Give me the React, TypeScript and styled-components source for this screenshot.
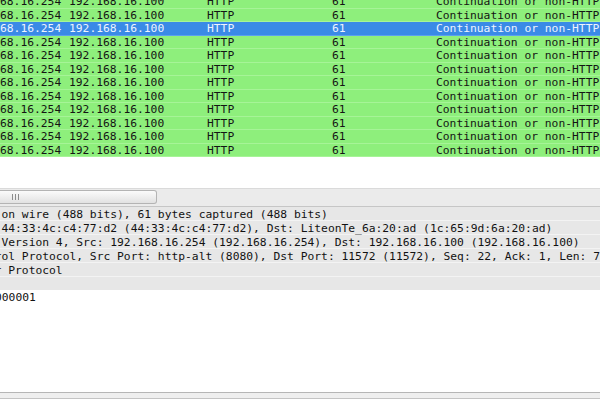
import styled, { createGlobalStyle } from "styled-components";

const GlobalStyle = createGlobalStyle`
    html, body {
        margin: 0;
        padding: 0;
        background: #ffffff;
        overflow: hidden;
    }
`

const mono = `"DejaVu Sans Mono", "Liberation Mono", monospace`;

const Window = styled.div`
    width: 600px;
    height: 400px;
    display: flex;
    flex-direction: column;
    overflow: hidden;
    font: 11.3px/1 ${mono};
    color: #121212;
`

const PacketPane = styled.div`
    height: 188px;
    overflow: hidden;
    background: #ffffff;
`

const PacketList = styled.div`
    margin-top: -5px;
    margin-left: -34px;
    width: 700px;
`

const PacketRow = styled.div<{ $selected?: boolean }>`
    display: grid;
    grid-template-columns: 103px 138px 125px 104px 1fr;
    align-items: center;
    height: 13.5px;
    box-sizing: border-box;
    padding-top: 1px;
    white-space: nowrap;
    background: ${(p) => (p.$selected ? "#3a8ae6" : "#8eef7c")};
    color: ${(p) => (p.$selected ? "#eef4ff" : "#141414")};
    border-bottom: 1px solid ${(p) => (p.$selected ? "#5c9ff0" : "#a6f497")};
`

const Cell = styled.span`
    overflow: visible;
`

const HScroll = styled.div`
    height: 19px;
    box-sizing: border-box;
    background: #ebebeb;
    border-top: 1px solid #dadada;
    border-bottom: 1px solid #c6c6c6;
    display: flex;
    align-items: flex-start;
`

const Thumb = styled.div`
    width: 157px;
    height: 14px;
    box-sizing: border-box;
    margin-top: 1px;
    background: linear-gradient(#fbfbfb, #e2e2e2);
    border: 1px solid #b4b4b4;
    border-left: none;
    border-radius: 0 3px 3px 0;
    display: flex;
    align-items: center;
    padding-left: 12px;
    gap: 2px;
`

const Grip = styled.i`
    width: 1px;
    height: 6px;
    background: #8c8c8c;
`

const DetailPane = styled.div`
    height: 83px;
    overflow: hidden;
    background: #e7e7e7;
`

const DetailRow = styled.div`
    height: 14px;
    box-sizing: border-box;
    padding-top: 3px;
    display: flex;
    align-items: center;
    white-space: nowrap;
    margin-left: -121px;
    border-bottom: 1px solid #f3f3f3;
`

const HexPane = styled.div`
    height: 102px;
    background: #ffffff;
    padding-top: 2px;
    box-sizing: border-box;
    margin-left: -5px;
    white-space: nowrap;
`

const StatusEdge = styled.div`
    height: 7px;
    box-sizing: border-box;
    border-top: 1px solid #b6b6b6;
    border-bottom: 1px solid #c4c4c4;
    background: #efefef;
`

const packets = Array.from({ length: 12 }, (_, i) => ({ id: i, selected: i === 2 }));

const details = [
    "Frame 3: 61 bytes on wire (488 bits), 61 bytes captured (488 bits)",
    "Ethernet II, Src: 44:33:4c:c4:77:d2 (44:33:4c:c4:77:d2), Dst: LiteonTe_6a:20:ad (1c:65:9d:6a:20:ad)",
    "Internet Protocol Version 4, Src: 192.168.16.254 (192.168.16.254), Dst: 192.168.16.100 (192.168.16.100)",
    "Transmission Control Protocol, Src Port: http-alt (8080), Dst Port: 11572 (11572), Seq: 22, Ack: 1, Len: 7",
    "Hypertext Transfer Protocol",
    "",
];

export default function App() {
    return (
        <Window>
            <GlobalStyle />
            <PacketPane>
                <PacketList>
                    {packets.map((p) => (
                        <PacketRow key={p.id} $selected={p.selected}>
                            <Cell>192.168.16.254</Cell>
                            <Cell>192.168.16.100</Cell>
                            <Cell>HTTP</Cell>
                            <Cell>61</Cell>
                            <Cell>Continuation or non-HTTP traffic</Cell>
                        </PacketRow>
                    ))}
                </PacketList>
            </PacketPane>
            <HScroll>
                <Thumb>
                    <Grip />
                    <Grip />
                    <Grip />
                </Thumb>
            </HScroll>
            <DetailPane>
                {details.map((d, i) => (
                    <DetailRow key={i}>{d}</DetailRow>
                ))}
            </DetailPane>
            <HexPane>000001</HexPane>
            <StatusEdge />
        </Window>
    );
}
